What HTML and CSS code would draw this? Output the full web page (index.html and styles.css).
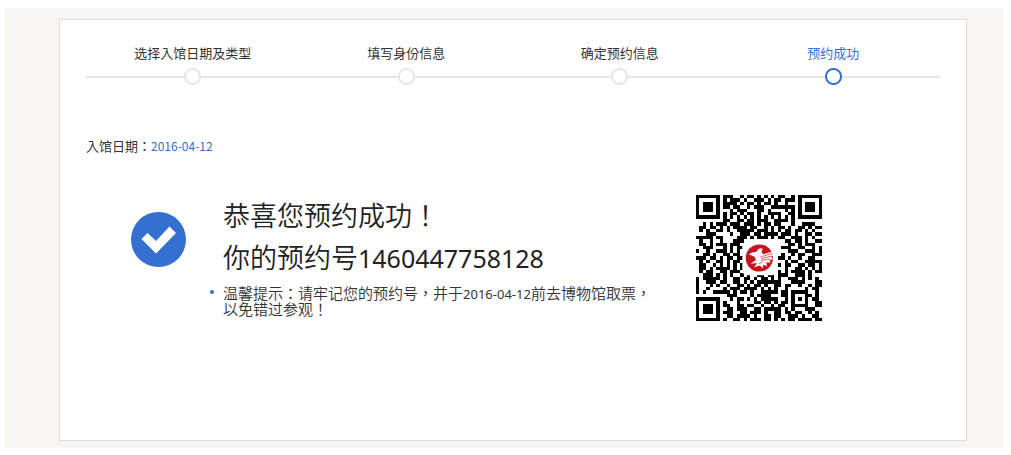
FILE: index.html
```html
<!DOCTYPE html>
<html lang="zh-TW">
<head>
  <meta charset="UTF-8">
  <meta name="viewport" content="width=device-width, initial-scale=1.0">
  <title>预约成功</title>
  <link rel="stylesheet" href="styles.css">
</head>

<body>
  <main class="page">
    <div class="panel">
      <ol class="steps">
        <li>选择入馆日期及类型</li>
        <li>填写身份信息</li>
        <li>确定预约信息</li>
        <li class="active" aria-current="step">预约成功</li>
      </ol>

      <p class="date">入馆日期：<span>2016-04-12</span></p>

      <div class="result">
        <svg class="check" viewBox="0 0 55 55" aria-hidden="true">
          <circle cx="27.5" cy="27.5" r="27.5"/>
          <path d="M10.5 27l6-6 8.500 8 13.500-14.500 6.500 6.500-20 20.500z"/>
        </svg>

        <div class="message">
          <h1>恭喜您预约成功！<br>你的预约号<span class="code">1460447758128</span></h1>
          <ul class="tips">
            <li>温馨提示：请牢记您的预约号，并于<span class="day">2016-04-12</span>前去博物馆取票，以免错过参观！</li>
          </ul>
        </div>

        <svg class="qr" viewBox="0 0 37 37" role="img" aria-label="二维码">
          <path id="modules" shape-rendering="crispEdges"/>
          <rect class="plate" x="13.6" y="13.6" width="10" height="10" rx="1.4"/>
          <g transform="translate(14.6 14.3)">
            <circle class="seal" cx="4" cy="4.2" r="4"/>
            <path class="bird" d="M1 3.200C1.800 2.200 2.600 2.800 3.200 2.300 3.600 1.500 4.300 1.100 5 1.500L4.600 2.500 5.200 3.100 7.900 2.300 7.500 3.100 8.200 3.300 7.400 4 8.100 4.400 7 4.900 7.300 5.500 6 5.500 6.300 6.600 5.200 6.200 4.900 7.200 4.200 6.400 2.500 6.900 3.300 5.700 1.400 5.900 3 4.800 2.600 3.800z"/>
            <path class="feather" d="M4.300 3.900l3.300-1M4.500 4.400l3.200-.8M4.500 4.900l2.800-.4M3.800 5.900l1.200-.6"/>
          </g>
        </svg>
      </div>
    </div>
  </main>

  <script>
    // one string per row, X is a dark module
    const rows = [
      'XXXXXXX.XXX..X.XX.X.X.X.XX..X.XXXXXXX',
      'X.....X.X.XXX.X..XXX.X.XX.XXX.X.....X',
      'X.XXX.X.XXXX.X.XX.X.XX.X..X...X.XXX.X',
      'X.XXX.X.XX.XX..X.XXX..XXXXXXX.X.XXX.X',
      'X.XXX.X...X.XXX...XX.X....X.X.X.XXX.X',
      'X.....X.X.XX.X.XX.X..XXXX..XX.X.....X',
      'XXXXXXX.X.X.X.X.X.X.X.X.X.X.X.XXXXXXX',
      '........XX..XX.XX.XXX..XXXX.X........',
      '..X.X.XXX.XXX.XXX.X.XX.XX...X..XXXX..',
      '.XX.XX.X.X.XXXX.XX..X.X.XX.X..XX.X.XX',
      '.X.X..XX.X..XXXXX.XXX.X.X.XX.XX.X.X..',
      '...XXX....X..XXX.XX.XXXX.XXX.X..XX.XX',
      'XXXXX.XX....XXX.X.XXX.X.XX..XXX.X.X..',
      '.X..X..X...XXX............XX.XX.X..XX',
      '.XX.X.XXX.XXX..............XX.X.XXX..',
      '..XXX...X.X.XX...........XXX..XX..X.X',
      'X..X..XXX.X.X..............XXX..XXX.X',
      '..XX.X..XX.XX............X..X.XX..XXX',
      'XXX.XX.X.XX.XX..........XX.X..X..XX..',
      '.X.X..XX.X.XX.............X.XX..XXXXX',
      '.XX..X.X.X.X.X..........X.XX..XX.XX.X',
      '.XX.X.XXXX.X.X............X..XX.X.X.X',
      '.X.XX..XX.XXX.X.........X.X.XXXX.X.XX',
      '..XXX.X.X.X..X.X..XX.XX.XXX..XXX.X...',
      'X.XXXXX.X..XX.XX.X.XX.X.X..XXX.X.X.X.',
      'X..XXX.XX..XX.X.X.XXXXXXX...XXXX...XX',
      'X...X.X..X..XX.X.XX.X..XX.XX..X..X.XX',
      'X..X....X.XXX.XXXX.X.X.X..X.....X.XX.',
      'X.X..XXXXX.X.XX.X..XXXXX.XX.XXXXX..X.',
      '.........XXX....X.XXXX...XX.X...XX.X.',
      'XXXXXXX...X.XX.X.X.XXXXX..X.X.X.X.XX.',
      'X.....X.X...X....XX.XX.X.XX.X...X..XX',
      'X.XXX.X.XX..XX.XX..X..X.XX..XXXXX..XX',
      'X.XXX.X..XX.XXX..XX.XXXXX.X.X...XXX..',
      'X.XXX.X.XXX..XX.XXX.X..XX.XX.XX..X.X.',
      'X.....X..XX.XXXX.X..XX.XX..XXX.X..XX.',
      'XXXXXXX.X..XX.X.XXX.XX.X.X.XX.XXXX.XX'
    ];

    let d = '';
    rows.forEach((row, y) => {
      for (const run of row.matchAll(/X+/g)) {
        d += `M${run.index} ${y}h${run[0].length}v1h-${run[0].length}z`;
      }
    });
    document.getElementById('modules').setAttribute('d', d);
  </script>
</body>
</html>
```
FILE: styles.css
```css
:root {
  --blue: #3470cf;
  --line: #e6e6e6;
  --text: #333;
}

* {
  box-sizing: border-box;
  margin: 0;
  padding: 0;
}

body {
  font-family: "Noto Sans CJK TC", "Noto Sans CJK SC", sans-serif;
  font-size: 13px;
  line-height: 16px;
  color: var(--text);
  background: #fff;
}

.page {
  margin: 8px 8px 7px 5px;
  padding: 11px 36px 7px 54px;
  background: #f8f4f1;
}

.panel {
  padding: 25px 26px 119px 26px;
  background: #fff;
  border: 1px solid #ddd;
}

.steps {
  display: grid;
  grid-template-columns: repeat(4, 1fr);
  list-style: none;
  text-align: center;
}

.steps li::after {
  content: '';
  display: block;
  height: 17px;
  margin-top: 7px;
  background:
    radial-gradient(circle closest-side, #fff 6px, var(--line) 7px, var(--line) 8px, transparent 9px) center / 17px 17px no-repeat,
    linear-gradient(var(--line), var(--line)) center / 100% 2px no-repeat;
}

.steps .active {
  color: var(--blue);
}

.steps .active::after {
  background:
    radial-gradient(circle closest-side, #fff 6px, var(--blue) 7px, var(--blue) 8px, transparent 9px) center / 17px 17px no-repeat,
    linear-gradient(var(--line), var(--line)) center / 100% 2px no-repeat;
}

.date {
  margin-top: 53px;
}

.date span {
  font-size: 12px;
  color: var(--blue);
}

.result {
  display: flex;
  align-items: flex-start;
  margin-top: 40px;
  padding-left: 45px;
}

.check {
  flex: none;
  width: 55px;
  height: 55px;
  margin-top: 18px;
  fill: var(--blue);
}

.check path {
  fill: #fff;
}

.message {
  width: 430px;
  margin-left: 37px;
}

h1 {
  font-size: 27px;
  font-weight: 350;
  line-height: 42px;
  color: #222;
}

.code {
  font-family: "Noto Sans", "Open Sans", sans-serif;
  font-size: 25px;
  font-weight: 400;
}

.tips {
  margin-top: 6px;
  list-style: none;
  font-size: 15px;
  font-weight: 350;
  line-height: 15px;
}

.tips li {
  position: relative;
}

.tips li::before {
  content: '';
  position: absolute;
  top: 5px;
  left: -13px;
  width: 4px;
  height: 4px;
  border-radius: 50%;
  background: var(--blue);
}

.day {
  font-family: "Noto Sans", "Open Sans", sans-serif;
  font-size: 13px;
  font-weight: 400;
  line-height: 1;
}

.qr {
  flex: none;
  width: 126px;
  height: 126px;
  margin-top: 1px;
  margin-left: 43px;
}

.plate {
  fill: #fff;
}

.seal {
  fill: #c8141c;
}

.bird {
  fill: #fff;
}

.feather {
  fill: none;
  stroke: #c8141c;
  stroke-width: .2;
}
```
